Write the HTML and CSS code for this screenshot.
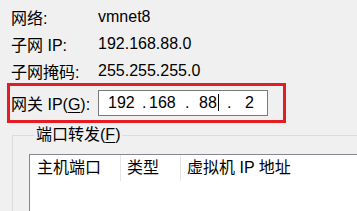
FILE: index.html
```html
<!DOCTYPE html>
<html lang="zh-CN">
<head>
    <meta charset="UTF-8">
    <title>NAT 设置</title>
    <link rel="stylesheet" href="styles.css">
</head>
<body>

    <div class="info">
        <div class="row"><span class="label">网络:</span><span>vmnet8</span></div>
        <div class="row"><span class="label">子网 IP:</span><span>192.168.88.0</span></div>
        <div class="row"><span class="label">子网掩码:</span><span>255.255.255.0</span></div>
        <div class="row gateway">
            <label class="label">网关 IP(<u>G</u>):</label>
            <div class="ip-box">
                <span class="oct o1">192</span><span class="dot d1">.</span><span class="oct o2">168</span><span class="dot d2">.</span><span class="oct o3">88<i class="caret"></i></span><span class="dot d3">.</span><span class="oct">2</span>
            </div>
        </div>
    </div>

    <fieldset class="forward">
        <legend>端口转发(<u>F</u>)</legend>
        <div class="list">
            <div class="list-head">
                <span class="col col-port">主机端口</span>
                <span class="col col-type">类型</span>
                <span class="col col-vm">虚拟机 IP 地址</span>
            </div>
        </div>
    </fieldset>

</body>
</html>
```

FILE: styles.css
```css
body {
    margin: 0;
    height: 211px;
    background-color: #f0f0f0;
    font-family: "Liberation Sans", "Noto Sans CJK SC", sans-serif;
    font-size: 16px;
    color: #000;
    overflow: hidden;
}
u {
    text-decoration-thickness: 1px;
    text-underline-offset: 2px;
}
.info {
    padding: 3px 0 0 11px;
}
.row {
    display: flex;
    align-items: center;
    height: 27px;
}
.label {
    width: 87px;
    flex-shrink: 0;
}
.gateway {
    box-sizing: border-box;
    margin: -1px 0 0 -4px;
    width: 279px;
    height: 40px;
    padding-left: 1px;
    border: 3px solid #e51c23;
}
.ip-box {
    box-sizing: border-box;
    width: 170px;
    height: 26px;
    display: flex;
    align-items: center;
    padding-left: 9px;
    background-color: white;
    border: 1px solid #7a7a7a;
}
.oct, .dot {
    display: inline-block;
    white-space: nowrap;
}
.o1 { width: 34px; }
.d1 { width: 7px; }
.o2 { width: 36px; }
.d2 { width: 14px; }
.o3 { width: 28px; }
.d3 { width: 18px; }
.caret {
    display: inline-block;
    width: 1px;
    height: 17px;
    margin-left: 1px;
    background-color: black;
    vertical-align: -3px;
}
.forward {
    box-sizing: border-box;
    height: 86px;
    margin: 2px 0 0 12px;
    padding: 9px 0 0 16px;
    border: 1px solid #dcdcdc;
    border-right: none;
    border-bottom: none;
}
.forward legend {
    margin-left: 5px;
    padding: 0 2px;
    line-height: 20px;
}
.list {
    box-sizing: border-box;
    height: 57px;
    background-color: white;
    border: 1px solid #828790;
    border-right: none;
    border-bottom: none;
}
.list-head {
    display: flex;
    height: 26px;
}
.col {
    box-sizing: border-box;
    line-height: 26px;
    padding-left: 6px;
    border-right: 1px solid #e5e5e5;
}
.col-port {
    width: 91px;
    padding-left: 7px;
}
.col-type {
    width: 60px;
}
.col-vm {
    border-right: none;
}
```
